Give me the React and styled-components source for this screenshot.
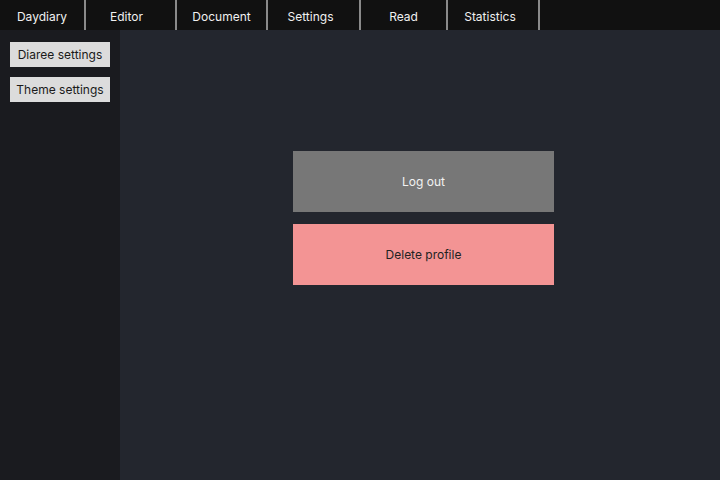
import styled, { createGlobalStyle } from "styled-components";

const GlobalStyle = createGlobalStyle`
  html, body {
    margin: 0;
    padding: 0;
    background: #23262e;
    font-family: Inter, "Noto Sans", sans-serif;
  }
  * {
    box-sizing: border-box;
  }
`;

const Page = styled.div`
  width: 720px;
  height: 480px;
  display: flex;
  flex-direction: column;
  overflow: hidden;
`;

const NavBar = styled.nav`
  height: 30px;
  background: #111111;
  display: flex;
`;

const NavItem = styled.div`
  width: ${(p) => p.$w}px;
  height: 30px;
  padding-top: 2px;
  padding-right: ${(p) => p.$shift || 0}px;
  border-right: 2px solid #8a8a8a;
  color: #f0f0f0;
  font-size: 12px;
  display: flex;
  align-items: center;
  justify-content: center;
`;

const Body = styled.div`
  flex: 1;
  display: flex;
`;

const Sidebar = styled.aside`
  width: 120px;
  background: #1a1b1f;
  padding: 12px 10px;
  display: flex;
  flex-direction: column;
  gap: 10px;
`;

const SideButton = styled.button`
  width: 100px;
  height: 25px;
  border: none;
  background: #dcdcdc;
  color: #1a1a1a;
  font-family: inherit;
  font-size: 12px;
  padding: 0;
  cursor: pointer;
`;

const Main = styled.main`
  flex: 1;
  background: #23262e;
  padding: 121px 0 0 173px;
  display: flex;
  flex-direction: column;
  gap: 12px;
`;

const ActionButton = styled.button`
  width: 261px;
  height: 61px;
  border: none;
  background: ${(p) => (p.$danger ? "#f39494" : "#777777")};
  color: ${(p) => (p.$danger ? "#222222" : "#f2f2f2")};
  font-family: inherit;
  font-size: 12px;
  cursor: pointer;
`;

const tabs = [
  ["Daydiary", 86, 0],
  ["Editor", 91, 8],
  ["Document", 91, 0],
  ["Settings", 93, 6],
  ["Read", 87, 0],
  ["Statistics", 92, 6],
];

export default function App() {
  return (
    <>
      <GlobalStyle />
      <Page>
        <NavBar>
          {tabs.map(([label, w, shift]) => (
            <NavItem key={label} $w={w} $shift={shift}>
              {label}
            </NavItem>
          ))}
        </NavBar>
        <Body>
          <Sidebar>
            <SideButton>Diaree settings</SideButton>
            <SideButton>Theme settings</SideButton>
          </Sidebar>
          <Main>
            <ActionButton>Log out</ActionButton>
            <ActionButton $danger>Delete profile</ActionButton>
          </Main>
        </Body>
      </Page>
    </>
  );
}
